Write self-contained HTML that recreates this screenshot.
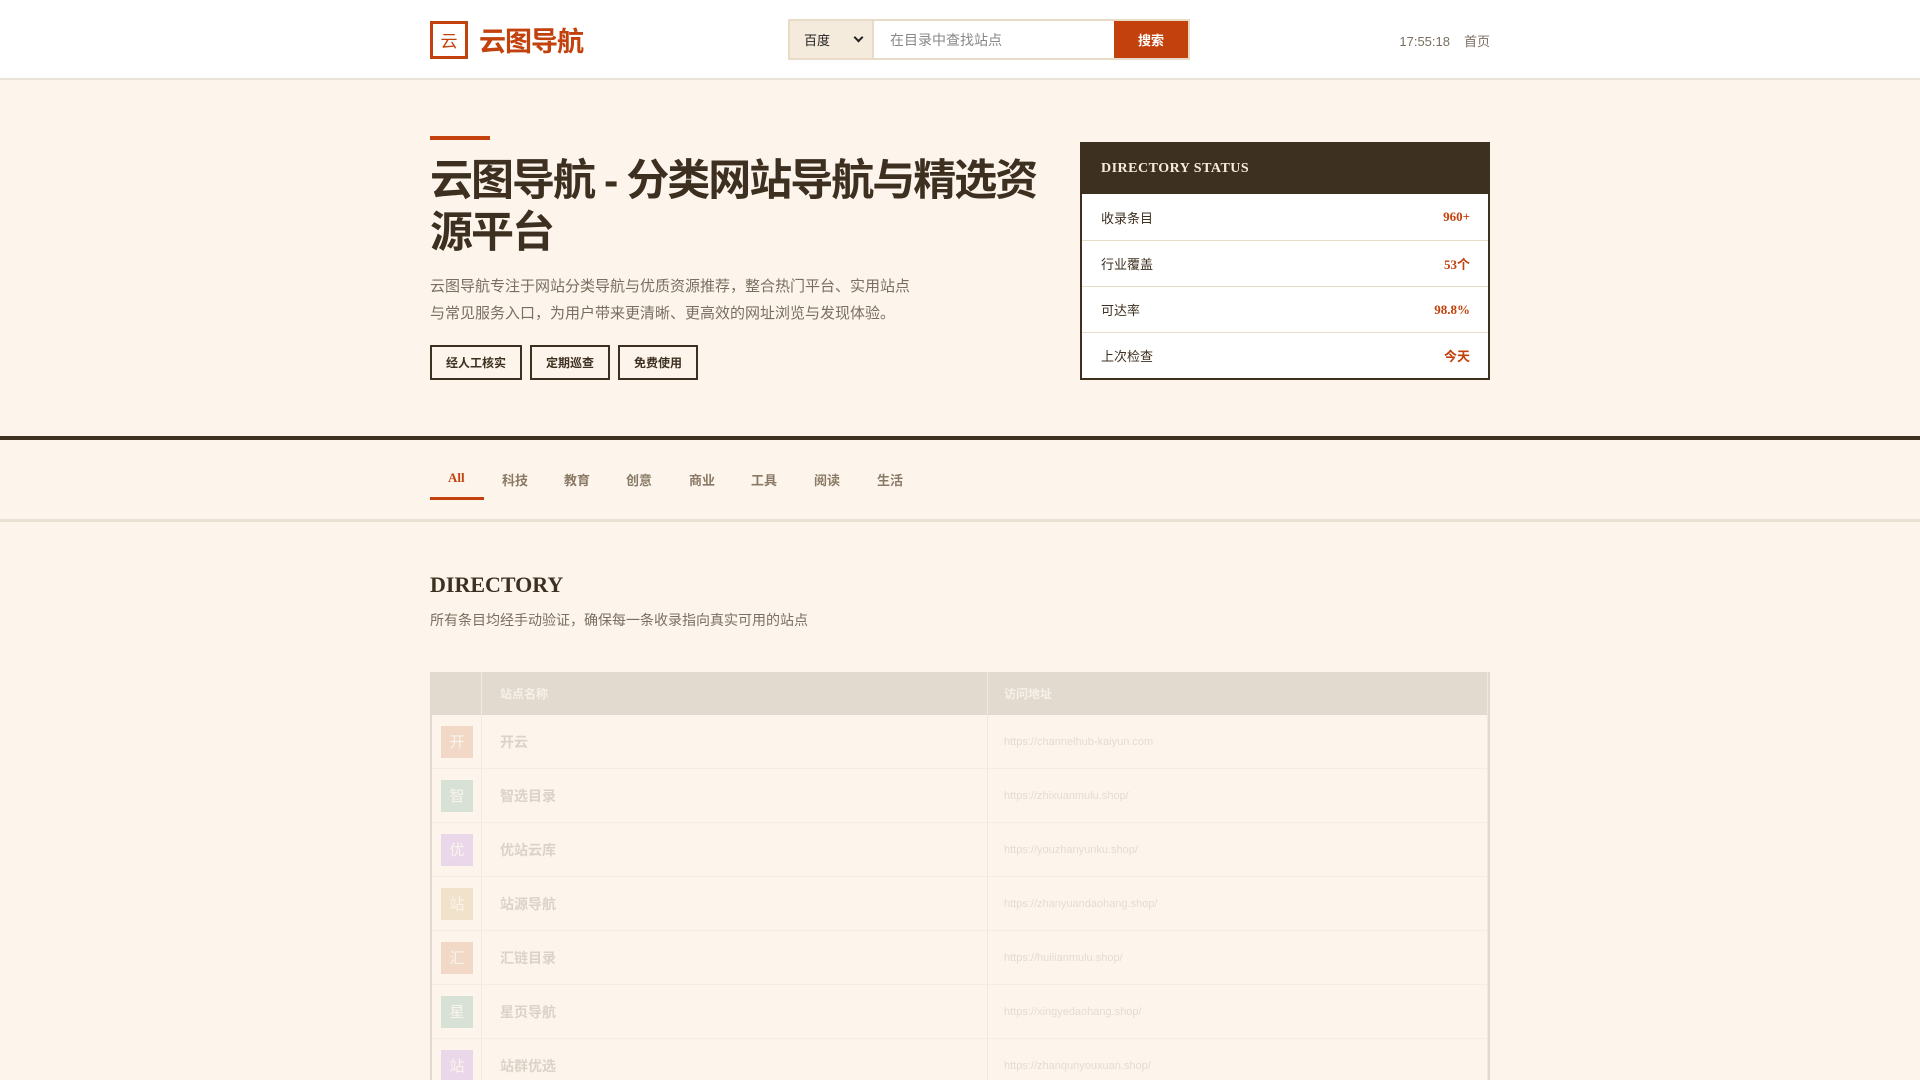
<!DOCTYPE html>
<html><head><meta charset="utf-8"><style>
*{box-sizing:border-box;margin:0;padding:0}
html,body{width:1920px;height:1080px;overflow:hidden}
body{background:#fdf5ec;font-family:"Liberation Sans","Noto Sans CJK SC",sans-serif;color:#3d3020;position:relative}
.wrap{width:1060px;position:absolute;left:430px;top:0}
header{position:absolute;left:0;top:0;width:1920px;height:80px;background:#fff;border-bottom:2px solid #ebe3d6}
.logo{position:absolute;left:0;top:20px;display:flex;align-items:center}
.lb{width:38px;height:38px;border:3px solid #c2410c;color:#c2410c;font-size:17px;display:flex;align-items:center;justify-content:center}
.lt{margin-left:11px;font-size:27px;font-weight:bold;color:#c2410c;letter-spacing:-1px}
.search{position:absolute;left:358px;top:19px;width:402px;height:41px;border:2px solid #e8dcc8;display:flex;background:#fff}
.sel{width:84px;background:#f5ebdd;border-right:2px solid #e8dcc8;font-size:13px;color:#222;display:flex;align-items:center;padding-left:14px;position:relative}
.sel:after{content:"";position:absolute;right:10px;top:13px;width:5px;height:5px;border-right:2px solid #222;border-bottom:2px solid #222;transform:rotate(45deg)}
.inp{flex:1;font-size:14px;color:#888;display:flex;align-items:center;padding-left:16px}
.btn{width:74px;background:#c2410c;color:#fff;font-size:13px;font-weight:bold;display:flex;align-items:center;justify-content:center}
.right{position:absolute;right:0;top:31px;font-size:13px;color:#7a6e60}
.right span{margin-left:14px}
.bar{position:absolute;left:0;top:136px;width:60px;height:4px;background:#c2410c}
h1{position:absolute;left:0;top:155px;width:640px;font-size:43px;line-height:52px;font-weight:bold;color:#3d3020;letter-spacing:-2px}
.desc{position:absolute;left:0;top:273px;width:488px;font-size:15px;line-height:27px;color:#7a6e60}
.tags{position:absolute;left:0;top:345px;display:flex;gap:8px}
.tags div{height:35px;border:2px solid #3d3020;font-size:12px;font-weight:bold;display:flex;align-items:center;justify-content:center;padding:0 14px}
.card{position:absolute;left:650px;top:142px;width:410px;border:2px solid #3d3020;background:#fff}
.ch{height:50px;background:#3d3020;color:#f5ebdd;font-family:"Liberation Serif",serif;font-weight:bold;font-size:14px;letter-spacing:.5px;padding-left:19px;display:flex;align-items:center}
.row{height:46px;border-top:1px solid #e8dcc8;display:flex;align-items:center;justify-content:space-between;padding:0 18px 0 19px;font-size:13px}
.ch+.row{border-top:0}
.row b{color:#c2410c;font-family:"Liberation Serif","Noto Sans CJK SC",serif;font-size:13px}
.dark{position:absolute;left:0;top:436px;width:1920px;height:4px;background:#3d3020}
.tabs{position:absolute;left:0;top:440px;width:1920px;height:82px;border-bottom:3px solid #ebe1d2}
.tabs .wrap{top:0}
.tl{position:absolute;top:30px;font-size:13px;font-weight:bold;color:#8a7a65}
.ul{position:absolute;left:0;top:57px;width:54px;height:3px;background:#c2410c}
.dh{position:absolute;left:0;top:572px;font-family:"Liberation Serif",serif;font-weight:bold;font-size:22px;color:#3d3020}
.ds{position:absolute;left:0;top:610px;font-size:14px;color:#7a6e60}
.tbl{position:absolute;left:0;top:672px;width:1060px;height:420px;border:2px solid #e0d8cc;border-top:0;opacity:.9}
.th{height:43px;background:#e0d8cc;display:flex;font-size:12px;color:#f6f1ea;font-weight:bold}
.th div,.tr div{border-right:1px solid #efe8de}
.c1{width:50px}.c2{width:506px;padding-left:18px}.c3{flex:1;padding-left:16px}
.th div{display:flex;align-items:center}
.tr{height:54px;display:flex;border-bottom:1px solid #f6ede0}
.tr div{display:flex;align-items:center}
.tr .c2{font-size:14px;font-weight:bold;color:#d8d0c4}
.tr .c3{font-size:11px;color:#e2dacd}
.ic{width:32px;height:32px;margin-left:9px;color:#fbf4ec;font-size:15px;display:flex;align-items:center;justify-content:center}
</style></head><body>
<header><div class="wrap">
<div class="logo"><div class="lb">云</div><div class="lt">云图导航</div></div>
<div class="search"><div class="sel">百度</div><div class="inp">在目录中查找站点</div><div class="btn">搜索</div></div>
<div class="right">17:55:18<span>首页</span></div>
</div></header>
<div class="wrap">
<div class="bar"></div>
<h1>云图导航 - 分类网站导航与精选资源平台</h1>
<div class="desc">云图导航专注于网站分类导航与优质资源推荐，整合热门平台、实用站点与常见服务入口，为用户带来更清晰、更高效的网址浏览与发现体验。</div>
<div class="tags"><div>经人工核实</div><div>定期巡查</div><div>免费使用</div></div>
<div class="card"><div class="ch">DIRECTORY STATUS</div>
<div class="row"><span>收录条目</span><b>960+</b></div>
<div class="row"><span>行业覆盖</span><b>53个</b></div>
<div class="row"><span>可达率</span><b>98.8%</b></div>
<div class="row"><span>上次检查</span><b>今天</b></div>
</div></div>
<div class="dark"></div>
<div class="tabs"><div class="wrap">
<div class="tl" style="left:18px;color:#c2410c;font-family:'Liberation Serif',serif">All</div>
<div class="tl" style="left:72px">科技</div><div class="tl" style="left:134px">教育</div><div class="tl" style="left:196px">创意</div><div class="tl" style="left:259px">商业</div><div class="tl" style="left:321px">工具</div><div class="tl" style="left:384px">阅读</div><div class="tl" style="left:447px">生活</div>
<div class="ul"></div></div></div>
<div class="wrap">
<div class="dh">DIRECTORY</div>
<div class="ds">所有条目均经手动验证，确保每一条收录指向真实可用的站点</div>
<div class="tbl">
<div class="th"><div class="c1"></div><div class="c2">站点名称</div><div class="c3">访问地址</div></div>
<div class="tr"><div class="c1"><span class="ic" style="background:#f0d5c4">开</span></div><div class="c2">开云</div><div class="c3">https://channelhub-kaiyun.com</div></div>
<div class="tr"><div class="c1"><span class="ic" style="background:#d5dfd4">智</span></div><div class="c2">智选目录</div><div class="c3">https://zhixuanmulu.shop/</div></div>
<div class="tr"><div class="c1"><span class="ic" style="background:#e8d5ea">优</span></div><div class="c2">优站云库</div><div class="c3">https://youzhanyunku.shop/</div></div>
<div class="tr"><div class="c1"><span class="ic" style="background:#f0e2c8">站</span></div><div class="c2">站源导航</div><div class="c3">https://zhanyuandaohang.shop/</div></div>
<div class="tr"><div class="c1"><span class="ic" style="background:#f0d5c4">汇</span></div><div class="c2">汇链目录</div><div class="c3">https://huilianmulu.shop/</div></div>
<div class="tr"><div class="c1"><span class="ic" style="background:#d5dfd4">星</span></div><div class="c2">星页导航</div><div class="c3">https://xingyedaohang.shop/</div></div>
<div class="tr"><div class="c1"><span class="ic" style="background:#e8d5ea">站</span></div><div class="c2">站群优选</div><div class="c3">https://zhanqunyouxuan.shop/</div></div>
</div></div>
</body></html>
